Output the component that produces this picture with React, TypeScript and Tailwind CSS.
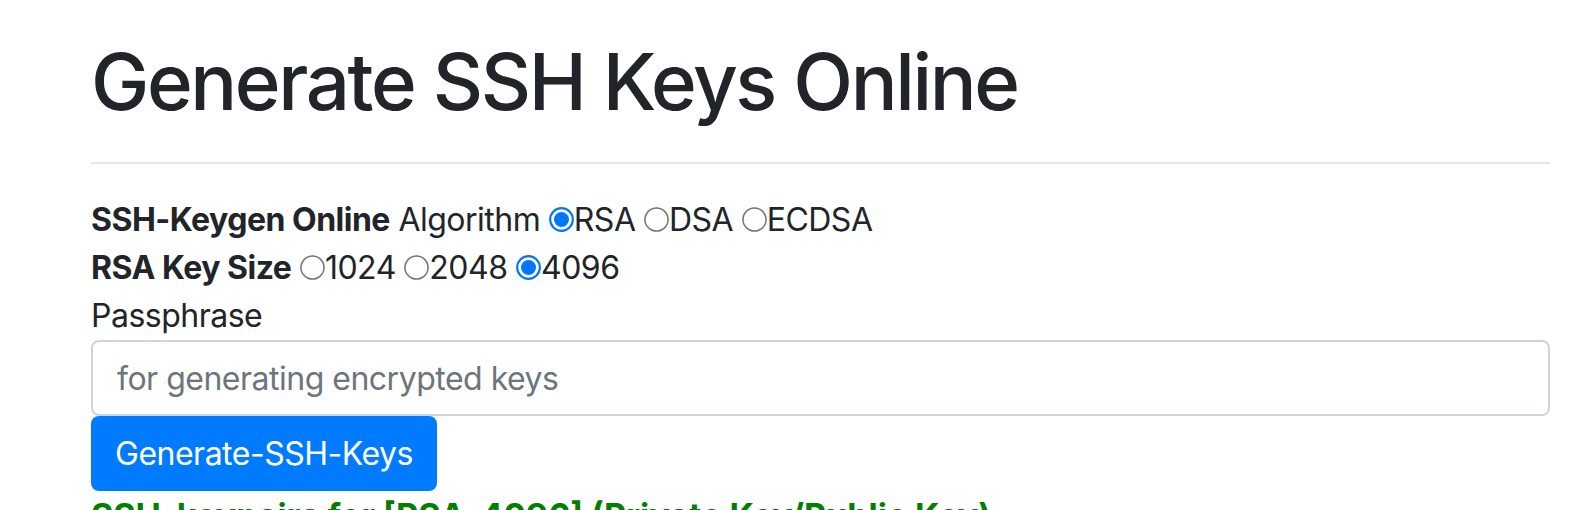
import React from "react";

const Radio = ({ checked = false }: { checked?: boolean }) => (
  <svg width="25" height="25" viewBox="0 0 26 26" className="inline-block align-[-1px]">
    {checked ? (
      <>
        <circle cx="13" cy="13" r="11.8" fill="#fff" stroke="#0075ff" strokeWidth="2.2" />
        <circle cx="13" cy="13" r="7.8" fill="#0075ff" />
      </>
    ) : (
      <circle cx="13" cy="13" r="12" fill="#fff" stroke="#767676" strokeWidth="1.6" />
    )}
  </svg>
);

const App = () => {
  return (
    <div className="h-[510px] overflow-hidden bg-white pl-[91px] pr-[36px] pt-[34px] font-['Inter',sans-serif] text-[#212529]">
      <h1 className="text-[78px] leading-[96px] font-medium tracking-[-2.4px]">Generate SSH Keys Online</h1>
      <hr className="mt-[32px] mb-[32px] border-t-2 border-[#e5e5e5]" />
      <div className="text-[32px] leading-[48px] tracking-[-0.5px]">
        <b className="font-bold">SSH-Keygen Online</b> Algorithm <Radio checked />RSA <Radio />DSA <Radio />ECDSA
      </div>
      <div className="text-[32px] leading-[48px] tracking-[-0.5px]">
        <b className="font-bold">RSA Key Size</b> <Radio />1024 <Radio />2048 <Radio checked />4096
      </div>
      <div className="text-[32px] leading-[48px] tracking-[-0.5px]">Passphrase</div>
      <input
        type="text"
        className="block w-full h-[76px] border-2 border-[#ced4da] rounded-[8px] px-[24px] text-[32px] tracking-[-0.5px] outline-none placeholder:text-[#6c757d]"
        placeholder="for generating encrypted keys"
      />
      <button className="block h-[75px] px-[24px] bg-[#007bff] text-white rounded-[8px] text-[32px] tracking-[-0.5px]">
        Generate-SSH-Keys
      </button>
      <div className="mt-[6px] text-[34px] leading-[38px] font-bold text-[#008000]">
        SSH-keypairs for [RSA-4096] (Private Key/Public Key)
      </div>
    </div>
  );
};

export default App;
